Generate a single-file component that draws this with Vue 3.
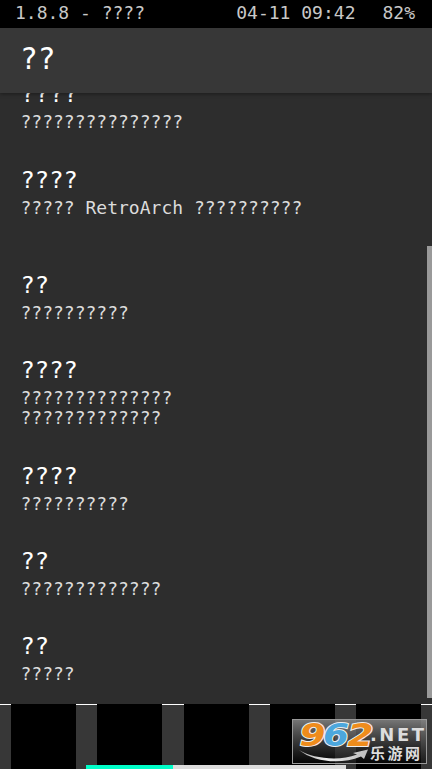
<script setup>
import { ref } from 'vue';

const version = '1.8.8 - ????';
const date = '04-11 09:42';
const battery = '82%';
const title = '??';

const entries = ref([
  { label: '????', lines: ['???????????????'] },
  { label: '????', lines: ['????? RetroArch ??????????', ''] },
  { label: '??', lines: ['??????????'] },
  { label: '????', lines: ['??????????????', '?????????????'] },
  { label: '????', lines: ['??????????'] },
  { label: '??', lines: ['?????????????'] },
  { label: '??', lines: ['?????'] },
]);

const tabs = 5;
</script>

<template>
  <div class="screen">
    <div class="status-bar">
      <span>{{ version }}</span>
      <span class="date">{{ date }}</span>
      <span class="battery">{{ battery }}</span>
    </div>
    <header class="header">{{ title }}</header>

    <main class="content">
      <ul class="list">
        <li v-for="(entry, i) in entries" :key="i" class="entry">
          <h2>{{ entry.label }}</h2>
          <p v-for="(line, j) in entry.lines" :key="j">{{ line }}</p>
        </li>
      </ul>
      <div class="scrollbar"></div>
    </main>

    <nav class="tabs">
      <div v-for="n in tabs" :key="n" class="tab">
        <div class="tab-icon"></div>
      </div>
      <div class="indicator">
        <span class="active"></span>
        <span class="rest"></span>
      </div>
      <svg class="logo" width="136" height="46" viewBox="0 0 136 46">
        <defs>
          <linearGradient id="panel" x1="0" y1="0" x2="0" y2="1">
            <stop offset="0" stop-color="#8c8c8c" stop-opacity="0.85" />
            <stop offset="0.55" stop-color="#484848" stop-opacity="0.7" />
            <stop offset="1" stop-color="#080808" stop-opacity="0.6" />
          </linearGradient>
          <linearGradient id="swoosh" x1="0" y1="0" x2="1" y2="0">
            <stop offset="0" stop-color="#aaa" />
            <stop offset="0.4" stop-color="#eee" />
            <stop offset="1" stop-color="#bbb" />
          </linearGradient>
        </defs>
        <rect x="0.5" y="0.5" width="134" height="44" fill="url(#panel)" stroke="#999" />
        <g class="digits">
          <text x="7.5" y="27" textLength="26" lengthAdjust="spacingAndGlyphs" fill="#ee8c1c">9</text>
          <text x="31" y="27" textLength="26" lengthAdjust="spacingAndGlyphs" fill="#4ca7dd">6</text>
          <text x="55.5" y="27" textLength="26" lengthAdjust="spacingAndGlyphs" fill="#ee8c1c">2</text>
        </g>
        <path d="M7 31 C20 39 46 43 65 35.5 L61 34 L76 30.5 L72 40 L69 37.5 C48 46 22 43 7 31Z" fill="url(#swoosh)" />
        <text class="net" x="78" y="22" textLength="54" lengthAdjust="spacing">.NET</text>
        <text class="site" x="78" y="39.5" textLength="50" lengthAdjust="spacing">乐游网</text>
      </svg>
    </nav>
  </div>
</template>

<style>
body {
  margin: 0;
  background: #000;
  overflow: hidden;
}
</style>

<style scoped>
.screen {
  display: flex;
  flex-direction: column;
  width: 432px;
  height: 769px;
  background: #2d2d2d;
  font-family: "DejaVu Sans Mono", "Liberation Mono", monospace;
  overflow: hidden;
}
.status-bar {
  display: flex;
  flex: none;
  box-sizing: border-box;
  height: 28px;
  padding: 0 17px 0 15px;
  background: #000;
  color: #c8c8c8;
  font-size: 18px;
  line-height: 26px;
  white-space: pre;
}
.date {
  margin-left: auto;
}
.battery {
  margin-left: 27px;
}
.header {
  flex: none;
  box-sizing: border-box;
  height: 65px;
  padding-left: 20px;
  background: #373737;
  color: #fff;
  font-size: 29.5px;
  line-height: 62px;
  box-shadow: 0 1px 4px rgba(0, 0, 0, 0.4);
  z-index: 1;
}
.content {
  position: relative;
  flex: 1;
  min-height: 0;
  overflow: hidden;
}
.list {
  margin: -12.6px 0 0;
  padding: 0 0 0 20.5px;
  list-style: none;
}
.entry {
  padding-bottom: 33.3px;
}
h2 {
  margin: 0 0 4px;
  color: #fff;
  font-size: 23.8px;
  font-weight: normal;
  line-height: 28px;
}
p {
  margin: 0;
  height: 20px;
  color: #dcdcdc;
  font-size: 18px;
  line-height: 20px;
  white-space: pre;
}
.scrollbar {
  position: absolute;
  top: 153px;
  right: 0;
  width: 5.5px;
  height: 452px;
  background: #999;
}
.tabs {
  position: relative;
  display: flex;
  flex: none;
  height: 65px;
  background: #373737;
}
.tab {
  display: flex;
  flex: 1;
  justify-content: center;
  box-sizing: border-box;
  box-shadow: inset 0 1px #fff;
}
.tab-icon {
  width: 65px;
  background: #000;
}
.indicator {
  position: absolute;
  left: 86px;
  bottom: 0;
  display: flex;
  height: 4px;
}
.active {
  width: 87px;
  background: #00ffc8;
}
.rest {
  width: 173px;
  background: #dcdcdc;
}
.logo {
  position: absolute;
  top: 15px;
  left: 292px;
}
.digits {
  font-family: "DejaVu Sans", sans-serif;
  font-size: 32px;
  font-weight: bold;
  font-style: italic;
  stroke: #eee;
  stroke-width: 2px;
  paint-order: stroke;
}
.net {
  fill: #ddd;
  font-family: "DejaVu Sans", sans-serif;
  font-size: 18px;
  font-weight: bold;
}
.site {
  fill: #ddd;
  font-family: "Noto Sans CJK SC", sans-serif;
  font-size: 15px;
  font-weight: bold;
}
</style>
